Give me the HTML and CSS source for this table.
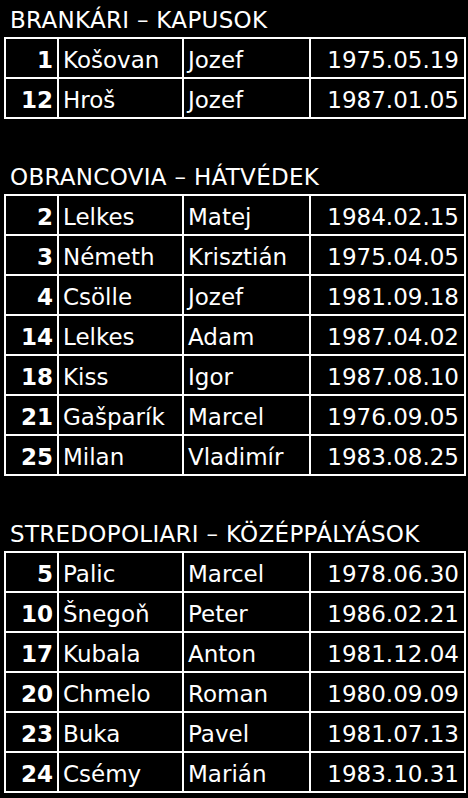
FILE: index.html
```html
<!DOCTYPE html>
<html lang="sk">
<head>
<meta charset="utf-8">
<title>Hráči</title>
<link rel="stylesheet" href="styles.css">
</head>
<body>
<main class="roster">
  <section class="group">
    <h2 class="group-title">BRANKÁRI – KAPUSOK</h2>
    <table class="players">
      <colgroup><col class="c-num"><col class="c-last"><col class="c-first"><col class="c-date"></colgroup>
      <tr><td class="num">1</td><td>Košovan</td><td>Jozef</td><td class="date">1975.05.19</td></tr>
      <tr><td class="num">12</td><td>Hroš</td><td>Jozef</td><td class="date">1987.01.05</td></tr>
    </table>
  </section>
  <section class="group">
    <h2 class="group-title">OBRANCOVIA – HÁTVÉDEK</h2>
    <table class="players">
      <colgroup><col class="c-num"><col class="c-last"><col class="c-first"><col class="c-date"></colgroup>
      <tr><td class="num">2</td><td>Lelkes</td><td>Matej</td><td class="date">1984.02.15</td></tr>
      <tr><td class="num">3</td><td>Németh</td><td>Krisztián</td><td class="date">1975.04.05</td></tr>
      <tr><td class="num">4</td><td>Csölle</td><td>Jozef</td><td class="date">1981.09.18</td></tr>
      <tr><td class="num">14</td><td>Lelkes</td><td>Adam</td><td class="date">1987.04.02</td></tr>
      <tr><td class="num">18</td><td>Kiss</td><td>Igor</td><td class="date">1987.08.10</td></tr>
      <tr><td class="num">21</td><td>Gašparík</td><td>Marcel</td><td class="date">1976.09.05</td></tr>
      <tr><td class="num">25</td><td>Milan</td><td>Vladimír</td><td class="date">1983.08.25</td></tr>
    </table>
  </section>
  <section class="group">
    <h2 class="group-title">STREDOPOLIARI – KÖZÉPPÁLYÁSOK</h2>
    <table class="players">
      <colgroup><col class="c-num"><col class="c-last"><col class="c-first"><col class="c-date"></colgroup>
      <tr><td class="num">5</td><td>Palic</td><td>Marcel</td><td class="date">1978.06.30</td></tr>
      <tr><td class="num">10</td><td>Šnegoň</td><td>Peter</td><td class="date">1986.02.21</td></tr>
      <tr><td class="num">17</td><td>Kubala</td><td>Anton</td><td class="date">1981.12.04</td></tr>
      <tr><td class="num">20</td><td>Chmelo</td><td>Roman</td><td class="date">1980.09.09</td></tr>
      <tr><td class="num">23</td><td>Buka</td><td>Pavel</td><td class="date">1981.07.13</td></tr>
      <tr><td class="num">24</td><td>Csémy</td><td>Marián</td><td class="date">1983.10.31</td></tr>
    </table>
  </section>
</main>
</body>
</html>
```

FILE: styles.css
```css
html, body {
  margin: 0;
  padding: 0;
  background: #000;
  color: #fff;
  font-family: "DejaVu Sans", Verdana, sans-serif;
  font-size: 23px;
}

.roster {
  padding: 6px 0 0 4px;
  display: flex;
  flex-direction: column;
  gap: 44px;
}

.group-title {
  margin: 0 0 3px 6px;
  font-size: 23px;
  font-weight: normal;
  line-height: 28px;
  letter-spacing: 0.3px;
  white-space: nowrap;
}

.players {
  border-collapse: collapse;
  table-layout: fixed;
  width: 460px;
  border: 2px solid #fff;
}

.c-num { width: 53px; }
.c-last { width: 125px; }
.c-first { width: 127px; }
.c-date { width: 155px; }

.players td {
  border: 2px solid #fff;
  height: 38px;
  box-sizing: border-box;
  padding: 4px 5px 0 4px;
  line-height: 34px;
  white-space: nowrap;
  overflow: hidden;
}

.players td.num {
  text-align: right;
  font-weight: bold;
  padding-right: 4px;
}

.players td.date {
  text-align: right;
  padding-right: 5px;
}
```
